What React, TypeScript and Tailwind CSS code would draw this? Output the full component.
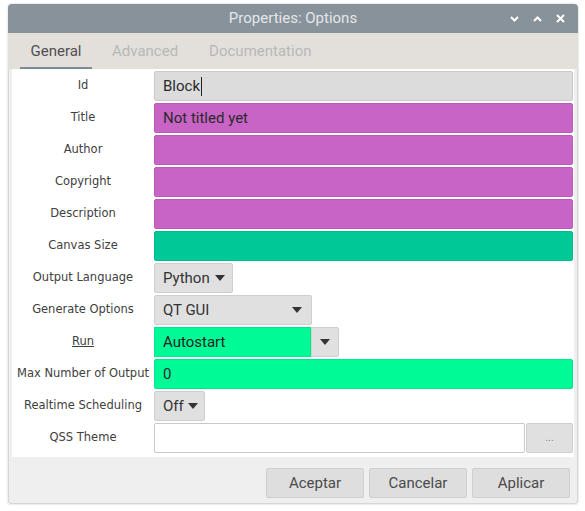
import React from "react";

const label = "w-[142px] shrink-0 text-center text-[11.5px] text-[#404040]";
const font = { fontFamily: "'DejaVu Sans', sans-serif" };

function Caret() {
  return (
    <svg width="10" height="6" viewBox="0 0 10 6" className="shrink-0">
      <path d="M0 0 L10 0 L5 6 Z" fill="#333" />
    </svg>
  );
}

function Row({ name, children, underline }: { name: string; children: React.ReactNode; underline?: boolean }) {
  return (
    <div className="flex items-center h-[32px]">
      <div className={label} style={font}>
        <span className={underline ? "underline" : ""}>{name}</span>
      </div>
      <div className="flex-1 flex items-center h-[30px]">{children}</div>
    </div>
  );
}

function Field({ bg, text, border = "border-[#c9c9c9]", caret }: { bg: string; text?: string; border?: string; caret?: boolean }) {
  return (
    <div className={`flex-1 h-full border ${border} ${bg} rounded-[2px] flex items-center px-2 text-[15px] text-[#2a2a2a]`}>
      {text}
      {caret && <span className="inline-block w-px h-[19px] bg-[#222] ml-px" />}
    </div>
  );
}

export default function App() {
  return (
    <div className="w-[585px] h-[511px] bg-white pt-[4px] pl-[8px]" style={{ fontFamily: "Roboto, sans-serif" }}>
      <div className="w-[570px] rounded-t-[4px] overflow-hidden shadow-[0_0_2px_rgba(0,0,0,0.25)]">
        {/* Title bar */}
        <div className="h-[29px] bg-[#87929a] flex items-center relative">
          <div className="flex-1 text-center text-[15px] text-[#e4e7ea]">Properties: Options</div>
          <div className="absolute right-[13px] top-0 h-full flex items-center gap-[14px] text-white">
            <svg width="9" height="6" viewBox="0 0 9 6"><path d="M1 1 L4.5 4.5 L8 1" stroke="white" strokeWidth="2" fill="none" /></svg>
            <svg width="9" height="6" viewBox="0 0 9 6"><path d="M1 5 L4.5 1.5 L8 5" stroke="white" strokeWidth="2" fill="none" /></svg>
            <svg width="9" height="9" viewBox="0 0 9 9"><path d="M1 1 L8 8 M8 1 L1 8" stroke="white" strokeWidth="2" fill="none" /></svg>
          </div>
        </div>

        {/* Tabs */}
        <div className="bg-[#e3e0dc] pl-[12px] pr-[3px] h-[36px] flex items-end">
          <div className="flex items-end h-full">
            <div className="w-[72px] h-full flex flex-col items-center justify-center relative text-[15px] text-[#4f4f4f]">
              General
              <div className="absolute bottom-0 left-0 right-0 h-[2px] bg-[#7d8a94]" />
            </div>
            <div className="ml-[20px] h-full flex items-center text-[15px] text-[#b8b8b8]">Advanced</div>
            <div className="ml-[31px] h-full flex items-center text-[15px] text-[#b8b8b8]">Documentation</div>
          </div>
        </div>

        {/* Body */}
        <div className="bg-[#efefef] border-x border-b border-[#d6d6d6] rounded-b-[3px]">
          <div className="mx-[3px] bg-white pt-[1px] pb-[3px] pr-[1px]">
            <Row name="Id"><Field bg="bg-[#dcdcdc]" text="Block" caret /></Row>
            <Row name="Title"><Field bg="bg-[#c864c6]" border="border-[#bb5ab9]" text="Not titled yet" /></Row>
            <Row name="Author"><Field bg="bg-[#c864c6]" border="border-[#bb5ab9]" /></Row>
            <Row name="Copyright"><Field bg="bg-[#c864c6]" border="border-[#bb5ab9]" /></Row>
            <Row name="Description"><Field bg="bg-[#c864c6]" border="border-[#bb5ab9]" /></Row>
            <Row name="Canvas Size"><Field bg="bg-[#00c896]" border="border-[#00bb8c]" /></Row>
            <Row name="Output Language">
              <div className="w-[79px] h-full bg-[#e0e0e0] border border-[#cfcfcf] rounded-[2px] flex items-center gap-[5px] px-2 text-[15px] text-[#333]">
                Python <Caret />
              </div>
            </Row>
            <Row name="Generate Options">
              <div className="w-[158px] h-full bg-[#e0e0e0] border border-[#cfcfcf] rounded-[2px] flex items-center justify-between pl-2 pr-[9px] text-[15px] text-[#333]">
                QT GUI <Caret />
              </div>
            </Row>
            <Row name="Run" underline>
              <div className="w-[157px] h-full bg-[#00fa96] border border-[#00e88a] flex items-center px-2 text-[15px] text-[#222]">Autostart</div>
              <div className="w-[28px] h-full bg-[#e0e0e0] border border-[#cfcfcf] rounded-r-[2px] flex items-center justify-center">
                <Caret />
              </div>
            </Row>
            <Row name="Max Number of Output"><Field bg="bg-[#00fa96]" border="border-[#00e88a]" text="0" /></Row>
            <Row name="Realtime Scheduling">
              <div className="w-[51px] h-full bg-[#e0e0e0] border border-[#cfcfcf] rounded-[2px] flex items-center gap-[4px] px-2 text-[15px] text-[#333]">
                Off <Caret />
              </div>
            </Row>
            <Row name="QSS Theme">
              <div className="flex-1 h-full border border-[#c9c9c9] rounded-[2px] bg-white" />
              <div className="w-[47px] ml-[1px] h-full bg-[#e0e0e0] border border-[#cfcfcf] rounded-[2px] flex items-center justify-center text-[11px] text-[#888]">...</div>
            </Row>
          </div>

          {/* Buttons */}
          <div className="flex justify-end gap-[5px] pt-[11px] pb-[5px] pr-[7px]">
            {["Aceptar", "Cancelar", "Aplicar"].map((b) => (
              <div key={b} className="w-[98px] h-[30px] bg-[#dedede] border border-[#cfcfcf] rounded-[2px] flex items-center justify-center text-[15px] text-[#4a4a4a]">
                {b}
              </div>
            ))}
          </div>
        </div>
      </div>
    </div>
  );
}
